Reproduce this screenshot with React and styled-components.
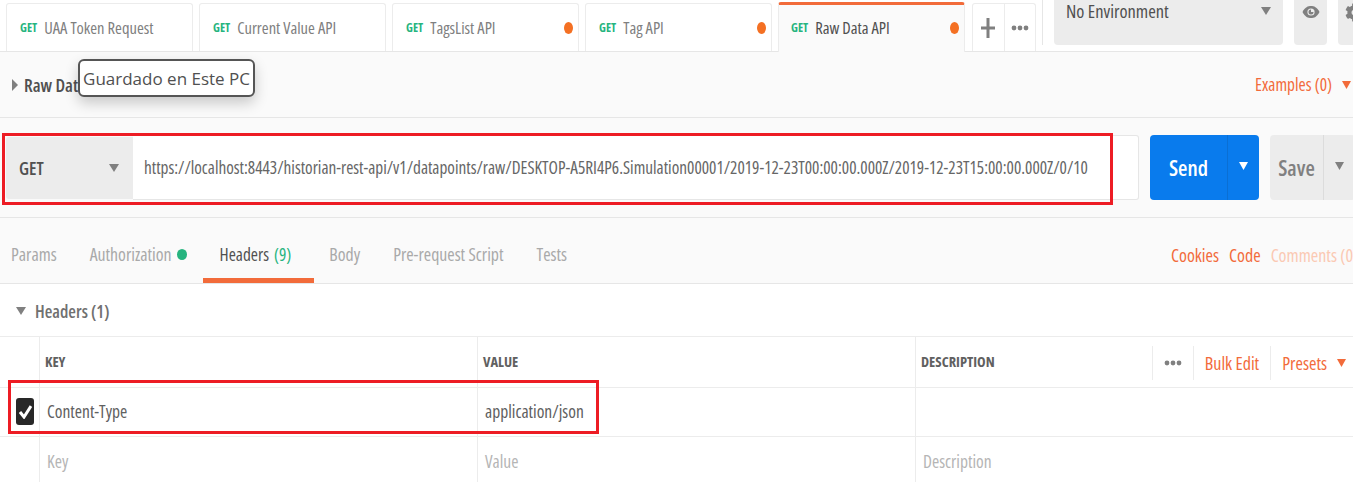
import React from "react";
import styled, { createGlobalStyle } from "styled-components";
import { FaCog } from "react-icons/fa";

const GlobalStyle = createGlobalStyle`
  html, body { margin: 0; padding: 0; background: #fff; }
  body {
    width: 1353px;
    height: 482px;
    overflow: hidden;
    font-family: "Open Sans", "Noto Sans", sans-serif;
    font-stretch: 75%;
    color: #505050;
  }
`;

const ORANGE = "#f26b3a";

const Page = styled.div`
  position: relative;
  width: 1353px;
  height: 482px;
  overflow: hidden;
`;

const TopBar = styled.div`
  display: flex;
  height: 52px;
  box-sizing: border-box;
  border-bottom: 1px solid #e6e6e6;
  background: #fff;
`;

const Tabs = styled.div`
  display: flex;
  flex: none;
  gap: 6px;
  padding: 3px 0 0 6px;
  box-sizing: border-box;
`;

const Tab = styled.div`
  display: flex;
  flex: none;
  align-items: center;
  width: 187px;
  height: ${(p) => (p.$active ? "50px" : "48px")};
  margin-top: ${(p) => (p.$active ? "-1px" : "0")};
  padding: ${(p) => (p.$active ? "0 5px 2px 12px" : "0 5px 0 13px")};
  box-sizing: border-box;
  border: 1px solid #ececec;
  border-bottom: 0;
  border-top: ${(p) => (p.$active ? `3px solid ${ORANGE}` : "1px solid #ececec")};
  border-radius: 3px 3px 0 0;
  background: ${(p) => (p.$active ? "#fafafa" : "#fff")};
  font-size: 16.500px;
  color: ${(p) => (p.$active ? "#505050" : "#808080")};
  white-space: nowrap;
`;

const Method = styled.span`
  margin-right: 7px;
  font-size: 12px;
  font-weight: 700;
  color: #26b47f;
`;

const TabName = styled.span`
  flex: 1;
`;

const Dot = styled.span`
  width: 9px;
  height: 12px;
  border-radius: 50%;
  background: #f47023;
`;

const TabTools = styled.div`
  display: flex;
  flex: none;
  width: 64px;
  height: 48px;
  margin: 3px 6px 0 7px;
  box-sizing: border-box;
  border: 1px solid #ececec;
  border-bottom: 0;
  border-radius: 3px 3px 0 0;
`;

const ToolCell = styled.div`
  display: flex;
  flex: 1;
  align-items: center;
  justify-content: center;
  color: #808080;
  & + & { border-left: 1px solid #ececec; }
`;

const EnvArea = styled.div`
  display: flex;
  flex: none;
  gap: 11px;
  height: 45px;
  padding-left: 11px;
  border-left: 1px solid #e6e6e6;
`;

const EnvSelect = styled.div`
  display: flex;
  flex: none;
  align-items: center;
  justify-content: space-between;
  width: 229px;
  padding: 0 12px 23px 12px;
  box-sizing: border-box;
  border-radius: 0 0 4px 4px;
  background: #ececec;
  font-size: 18.400px;
  line-height: 22px;
`;

const EnvButton = styled.div`
  display: flex;
  flex: none;
  justify-content: center;
  width: 33px;
  padding-top: 3px;
  box-sizing: border-box;
  border-radius: 0 0 4px 4px;
  background: #ececec;
  color: #808080;
`;

const Band = styled.div`
  box-sizing: border-box;
  background: #fafafa;
  border-bottom: 1px solid #e6e6e6;
`;

const TitleBand = styled(Band)`
  display: flex;
  align-items: center;
  justify-content: space-between;
  height: 66px;
  padding: 0 2px 0 12px;
`;

const Title = styled.div`
  display: flex;
  align-items: center;
  gap: 6px;
  font-size: 18px;
  font-weight: 600;
`;

const OrangeLink = styled.span`
  display: inline-flex;
  align-items: center;
  gap: 10px;
  font-size: ${(p) => p.$size || 18}px;
  font-weight: 400;
  color: ${(p) => (p.$faded ? "#fbc9b3" : ORANGE)};
  white-space: nowrap;
`;

const UrlBand = styled(Band)`
  display: flex;
  height: 100px;
  padding: 17px 0 0 6px;
`;

const MethodSelect = styled.div`
  display: flex;
  flex: none;
  align-items: center;
  justify-content: space-between;
  width: 127px;
  height: 62px;
  padding: 0 14px 1px 13px;
  box-sizing: border-box;
  margin-top: 2px;
  border-radius: 3px 0 0 3px;
  background: #ececec;
  font-size: 18px;
  font-weight: 600;
`;

const UrlInput = styled.div`
  display: flex;
  flex: none;
  align-items: center;
  width: 1006px;
  height: 65px;
  padding-left: 11px;
  box-sizing: border-box;
  background: #fff;
  border: 1px solid #e6e6e6;
  border-left: 0;
  border-radius: 0 3px 3px 0;
  font-size: 17.270px;
  color: #666;
  white-space: nowrap;
`;

const SplitButton = styled.div`
  display: flex;
  flex: none;
  height: 65px;
  margin-left: ${(p) => p.$gap}px;
  border-radius: 4px;
  overflow: hidden;
  background: ${(p) => (p.$primary ? "#097bed" : "#ececec")};
  color: ${(p) => (p.$primary ? "#fff" : "#808080")};
  font-size: 21.500px;
  font-weight: 600;
`;

const SplitLabel = styled.div`
  display: flex;
  align-items: center;
  justify-content: center;
  width: ${(p) => p.$width}px;
  padding-bottom: 1px;
  box-sizing: border-box;
`;

const SplitCaret = styled.div`
  display: flex;
  align-items: center;
  justify-content: center;
  width: 32px;
  padding-bottom: 3px;
  box-sizing: border-box;
  border-left: 1px solid ${(p) => (p.$primary ? "#0a6fd4" : "#dcdcdc")};
`;

const RequestTabs = styled(Band)`
  display: flex;
  align-items: stretch;
  justify-content: space-between;
  height: 66px;
  padding-left: 11px;
`;

const TabGroup = styled.div`
  display: flex;
  gap: 33px;
`;

const ReqTab = styled.div`
  display: flex;
  align-items: center;
  gap: 5px;
  padding: ${(p) => (p.$active ? "12px 23px 0 17px" : "12px 0 0")};
  margin: ${(p) => (p.$active ? "0 -18px 0 -17px" : "0")};
  border-bottom: ${(p) => (p.$active ? `5px solid ${ORANGE}` : "5px solid transparent")};
  font-size: ${(p) => (p.$active ? 17.300 : 17.800)}px;
  color: ${(p) => (p.$active ? "#505050" : "#a9a9a9")};
  white-space: nowrap;
`;

const Count = styled.span`
  color: #26b47f;
`;

const GreenDot = styled.span`
  width: 10px;
  height: 11px;
  border-radius: 50%;
  background: #26b47f;
`;

const RightLinks = styled.div`
  display: flex;
  flex: none;
  align-items: center;
  gap: 10px;
  width: 182px;
  padding-top: 14px;
  margin-bottom: 5px;
`;

const SectionHead = styled.div`
  display: flex;
  align-items: center;
  gap: 9px;
  height: 53px;
  padding: 1px 0 0 16px;
  box-sizing: border-box;
  border-bottom: 1px solid #ececec;
  font-size: 17.500px;
  font-weight: 600;
  color: #707070;
`;

const Row = styled.div`
  display: grid;
  grid-template-columns: 39px 438px 438px 1fr;
  height: ${(p) => p.$height}px;
  box-sizing: border-box;
  border-bottom: ${(p) => (p.$last ? "0" : "1px solid #ececec")};
`;

const Cell = styled.div`
  display: flex;
  align-items: center;
  padding-left: ${(p) => (p.$head ? 5 : p.$flush ? 0 : 7)}px;
  padding-bottom: ${(p) => p.$lift || 0}px;
  padding-top: ${(p) => p.$drop || 0}px;
  box-sizing: border-box;
  border-left: ${(p) => (p.$first ? "0" : "1px solid #ececec")};
  font-size: ${(p) => (p.$head ? 14.500 : 17.500)}px;
  font-weight: ${(p) => (p.$head ? 700 : 400)};
  color: ${(p) => (p.$muted ? "#b5b5b5" : "#606060")};
  white-space: nowrap;
`;

const DescCell = styled(Cell)`
  justify-content: space-between;
`;

const Actions = styled.div`
  display: flex;
  align-items: center;
  height: 34px;
  margin-top: 2px;
`;

const Action = styled.div`
  display: flex;
  align-items: center;
  height: 100%;
  padding: 0 11px;
  border-left: 1px solid #ececec;
  &:last-child { padding: 0 7px 0 11px; }
`;

const Check = styled.span`
  display: flex;
  align-items: center;
  justify-content: center;
  width: 18px;
  height: 27px;
  margin-left: 16px;
  border-radius: 3px;
  background: #282828;
`;

const Tooltip = styled.div`
  position: absolute;
  left: 78px;
  top: 59px;
  width: 177px;
  height: 38px;
  display: flex;
  align-items: center;
  justify-content: center;
  box-sizing: border-box;
  border: 2px solid #555;
  border-radius: 6px;
  background: #fff;
  box-shadow: 0 6px 14px rgba(0, 0, 0, 0.2);
  font-size: 17px;
  font-stretch: 100%;
  color: #505050;
  white-space: nowrap;
`;

const Callout = styled.div`
  position: absolute;
  left: ${(p) => p.$x}px;
  top: ${(p) => p.$y}px;
  width: ${(p) => p.$w}px;
  height: ${(p) => p.$h}px;
  box-sizing: border-box;
  border: 3px solid #ed1c24;
  pointer-events: none;
`;

const Caret = ({ color = "#808080", w = 9, h = 9, right }) => (
  <svg width={w} height={h} viewBox="0 0 10 10" preserveAspectRatio="none" style={{ flex: "none" }}>
    <path d={right ? "M0 0L10 5L0 10Z" : "M0 0H10L5 10Z"} fill={color} />
  </svg>
);

const Dots = () => (
  <svg width="18" height="6" viewBox="0 0 18 6">
    <circle cx="3" cy="3" r="2.400" fill="#808080" />
    <circle cx="9" cy="3" r="2.400" fill="#808080" />
    <circle cx="15" cy="3" r="2.400" fill="#808080" />
  </svg>
);

const PlusIcon = () => (
  <svg width="14" height="20" viewBox="0 0 14 20">
    <path d="M5.500 0h3v8.500H14v3H8.500V20h-3v-8.500H0v-3h5.500z" fill="#808080" />
  </svg>
);

const EyeIcon = () => (
  <svg width="18" height="18" viewBox="0 0 18 18">
    <path d="M0.500 9C3 4 6 3 9 3s6 1 8.500 6c-2.500 5-5.500 6-8.500 6s-6-1-8.500-6Z" fill="#808080" />
    <circle cx="9" cy="9" r="3.600" fill="#ececec" />
    <path d="M9 6.500V9h2.500A2.500 2.500 0 1 1 9 6.500Z" fill="#808080" />
  </svg>
);

const CheckMark = () => (
  <svg width="13" height="15" viewBox="0 0 13 15">
    <path d="M1 8l4 5 7-11" fill="none" stroke="#fff" strokeWidth="3" />
  </svg>
);

const tabs = [
  { name: "UAA Token Request" },
  { name: "Current Value API" },
  { name: "TagsList API", dirty: true },
  { name: "Tag API", dirty: true },
  { name: "Raw Data API", dirty: true, active: true },
];

const url =
  "https://localhost:8443/historian-rest-api/v1/datapoints/raw/DESKTOP-A5RI4P6.Simulation00001/2019-12-23T00:00:00.000Z/2019-12-23T15:00:00.000Z/0/10";

export default function App() {
  return (
    <Page>
      <GlobalStyle />
      <TopBar>
        <Tabs>
          {tabs.map((tab) => (
            <Tab key={tab.name} $active={tab.active}>
              <Method>GET</Method>
              <TabName>{tab.name}</TabName>
              {tab.dirty && <Dot />}
            </Tab>
          ))}
        </Tabs>
        <TabTools>
          <ToolCell><PlusIcon /></ToolCell>
          <ToolCell><Dots /></ToolCell>
        </TabTools>
        <EnvArea>
          <EnvSelect>
            No Environment
            <Caret w={10} h={8} />
          </EnvSelect>
          <EnvButton><EyeIcon /></EnvButton>
          <EnvButton><FaCog size={19} /></EnvButton>
        </EnvArea>
      </TopBar>

      <TitleBand>
        <Title>
          <Caret right w={6} h={12} />
          Raw Data API
        </Title>
        <OrangeLink $size={17.300}>
          Examples (0)
          <Caret color={ORANGE} w={9} h={8} />
        </OrangeLink>
      </TitleBand>

      <UrlBand>
        <MethodSelect>
          GET
          <Caret w={10} h={8} />
        </MethodSelect>
        <UrlInput>{url}</UrlInput>
        <SplitButton $primary $gap={11}>
          <SplitLabel $width={77}>Send</SplitLabel>
          <SplitCaret $primary><Caret color="#fff" w={9} h={8} /></SplitCaret>
        </SplitButton>
        <SplitButton $gap={11}>
          <SplitLabel $width={53}>Save</SplitLabel>
          <SplitCaret><Caret w={9} h={8} /></SplitCaret>
        </SplitButton>
      </UrlBand>

      <RequestTabs>
        <TabGroup>
          <ReqTab>Params</ReqTab>
          <ReqTab>Authorization<GreenDot /></ReqTab>
          <ReqTab $active>Headers <Count>(9)</Count></ReqTab>
          <ReqTab>Body</ReqTab>
          <ReqTab>Pre-request Script</ReqTab>
          <ReqTab>Tests</ReqTab>
        </TabGroup>
        <RightLinks>
          <OrangeLink>Cookies</OrangeLink>
          <OrangeLink>Code</OrangeLink>
          <OrangeLink $faded>Comments (0)</OrangeLink>
        </RightLinks>
      </RequestTabs>

      <SectionHead>
        <Caret w={10} h={8} />
        Headers (1)
      </SectionHead>

      <Row $height={51}>
        <Cell $first />
        <Cell $head $lift={1}>KEY</Cell>
        <Cell $head $lift={1}>VALUE</Cell>
        <DescCell $head $lift={1}>
          DESCRIPTION
          <Actions>
            <Action><Dots /></Action>
            <Action><OrangeLink>Bulk Edit</OrangeLink></Action>
            <Action><OrangeLink>Presets<Caret color={ORANGE} w={9} h={8} /></OrangeLink></Action>
          </Actions>
        </DescCell>
      </Row>
      <Row $height={49}>
        <Cell $first $flush $lift={2}><Check><CheckMark /></Check></Cell>
        <Cell $lift={3}>Content-Type</Cell>
        <Cell $lift={3}>application/json</Cell>
        <Cell />
      </Row>
      <Row $height={46} $last>
        <Cell $first />
        <Cell $muted $drop={2}>Key</Cell>
        <Cell $muted $drop={2}>Value</Cell>
        <Cell $muted $drop={2}>Description</Cell>
      </Row>

      <Tooltip>Guardado en Este PC</Tooltip>
      <Callout $x={2} $y={133} $w={1111} $h={72} />
      <Callout $x={8} $y={380} $w={591} $h={54} />
    </Page>
  );
}
